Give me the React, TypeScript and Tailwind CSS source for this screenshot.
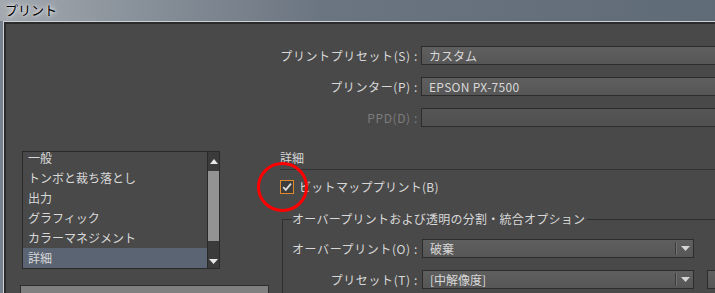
import React from 'react';

const items = ['一般', 'トンボと裁ち落とし', '出力', 'グラフィック', 'カラーマネジメント', '詳細'];

function TriUp() {
  return (
    <svg width="8" height="5" viewBox="0 0 8 5">
      <path d="M0 5 L4 0 L8 5 Z" fill="#e8e8e8" />
    </svg>
  );
}

function TriDown({ color = '#e8e8e8' }: { color?: string }) {
  return (
    <svg width="9" height="5" viewBox="0 0 9 5">
      <path d="M0 0 L9 0 L4.5 5 Z" fill={color} />
    </svg>
  );
}

function Select({ text, disabled, arrow, className }: { text?: string; disabled?: boolean; arrow?: boolean; className?: string }) {
  return (
    <div
      className={
        'h-[19px] shrink-0 flex items-center border border-[#2c2c2c] ' +
        (disabled
          ? 'bg-[linear-gradient(180deg,#555555,#505050)] '
          : 'bg-[linear-gradient(180deg,#5f5f5f,#565656)] ') +
        (className ?? '')
      }
    >
      <div className="flex-1 pl-[7px] whitespace-nowrap overflow-hidden">{text}</div>
      {arrow && (
        <div className="h-full flex items-center">
          <div className="h-[13px] border-l border-[#3a3a3a]" />
          <div className="h-[13px] border-l border-[#727272]" />
          <div className="w-[16px] flex justify-center">
            <TriDown color="#d4d4d4" />
          </div>
        </div>
      )}
    </div>
  );
}

export default function App() {
  return (
    <div className="relative w-[715px] h-[293px] overflow-hidden bg-[#77818d] font-['Noto_Sans_CJK_JP','Noto_Sans',sans-serif] text-[12px] leading-[16px]">
      {/* Title bar */}
      <div className="h-[21px] pl-[5px] pt-[2px] text-[13px] text-black bg-[linear-gradient(90deg,#a3a9af_0%,#8a929b_18%,#6b7581_45%,#606b78_100%)] [text-shadow:0_0_6px_#ffffff,0_0_3px_#ffffff]">
        プリント
      </div>

      {/* Window body */}
      <div className="h-[272px] pl-[3px]">
        <div className="h-full border-l border-t border-[#cdd1d5]">
          <div className="h-full border-l-2 border-t-2 border-[#2b2b2b] bg-[#494949] text-[#d8d8d8]">
            {/* Preset rows */}
            <div className="pt-[22px] flex flex-col gap-[12px]">
              <div className="flex items-center gap-[3px]">
                <div className="w-[412px] shrink-0 text-right tracking-[0.6px]">プリントプリセット(S) :</div>
                <Select text="カスタム" className="w-[400px]" />
              </div>
              <div className="flex items-center gap-[3px]">
                <div className="w-[412px] shrink-0 text-right tracking-[0.6px]">プリンター(P) :</div>
                <Select text="EPSON PX-7500" className="w-[400px] tracking-[0.3px]" />
              </div>
              <div className="flex items-center gap-[3px]">
                <div className="w-[412px] shrink-0 text-right text-[#7c7c7c] tracking-[0.6px]">PPD(D) :</div>
                <Select disabled className="w-[400px]" />
              </div>
            </div>

            <div className="mt-[21px] flex">
              {/* Category list */}
              <div className="w-[274px] shrink-0 pl-[16px]">
                <div className="mt-[3px] w-[198px] h-[118px] flex border border-[#2a2a2a] overflow-hidden">
                  <div className="flex-1 overflow-hidden">
                    <div className="-mt-[4px]">
                      {items.map((it, i) => (
                        <div
                          key={i}
                          className={
                            'h-[20px] pl-[5px] flex items-center whitespace-nowrap ' +
                            (i === items.length - 1 ? 'bg-[#5b6473]' : '')
                          }
                        >
                          {it}
                        </div>
                      ))}
                    </div>
                  </div>
                  <div className="w-[12px] border-l border-[#2a2a2a] bg-[#3b3b3b] flex flex-col">
                    <div className="h-[19px] flex items-center justify-center">
                      <TriUp />
                    </div>
                    <div className="h-[70px] bg-[#939393]" />
                    <div className="flex-1 flex items-end justify-center pb-[4px]">
                      <TriDown />
                    </div>
                  </div>
                </div>
                <div className="mt-[16px] -ml-[2px] w-[249px] h-[20px] bg-[#808080] border border-[#2e2e2e]" />
              </div>

              {/* Detail panel */}
              <div className="flex-1 min-w-0">
                <div className="h-[22px] pt-[2px] border-b border-[#323232]">詳細</div>

                <div className="mt-[10px] h-[14px] flex items-center gap-[5px]">
                  <div className="w-[14px] h-[14px] border border-[#e0892a] bg-[#3d3d3d] flex items-center justify-center">
                    <svg width="12" height="12" viewBox="0 0 12 12">
                      <path d="M2.2 6.2 L4.8 8.8 L10 2.6" fill="none" stroke="#dcdcdc" strokeWidth="1.8" />
                    </svg>
                  </div>
                  <span className="whitespace-nowrap tracking-[0.3px]">ビットマッププリント(B)</span>
                </div>

                <div className="mt-[17px] ml-[2px]">
                  <div className="flex h-[16px]">
                    <div className="w-[10px] mt-[8px] border-l border-t border-[#2f2f2f]" />
                    <div className="pr-[2px] whitespace-nowrap tracking-[0.25px]">オーバープリントおよび透明の分割・統合オプション</div>
                    <div className="flex-1 mt-[8px] border-t border-[#2f2f2f]" />
                  </div>
                  <div className="border-l border-[#2f2f2f] pt-[12px] pb-[10px] flex flex-col gap-[12px]">
                    <div className="flex items-center gap-[4px]">
                      <div className="w-[135px] shrink-0 text-right whitespace-nowrap tracking-[0.6px]">オーバープリント(O) :</div>
                      <Select text="破棄" arrow className="w-[272px]" />
                    </div>
                    <div className="flex items-center gap-[4px]">
                      <div className="w-[135px] shrink-0 text-right whitespace-nowrap tracking-[0.6px]">プリセット(T) :</div>
                      <Select text="[中解像度]" arrow className="w-[272px]" />
                      <Select className="ml-[9px] w-[60px]" />
                    </div>
                  </div>
                </div>
              </div>
            </div>
          </div>
        </div>
      </div>

      {/* Annotation circle */}
      <svg className="absolute left-[256px] top-[160px]" width="54" height="54" viewBox="0 0 54 54">
        <ellipse cx="26.5" cy="27" rx="24" ry="23.5" fill="none" stroke="#ff0000" strokeWidth="3" />
      </svg>
    </div>
  );
}
